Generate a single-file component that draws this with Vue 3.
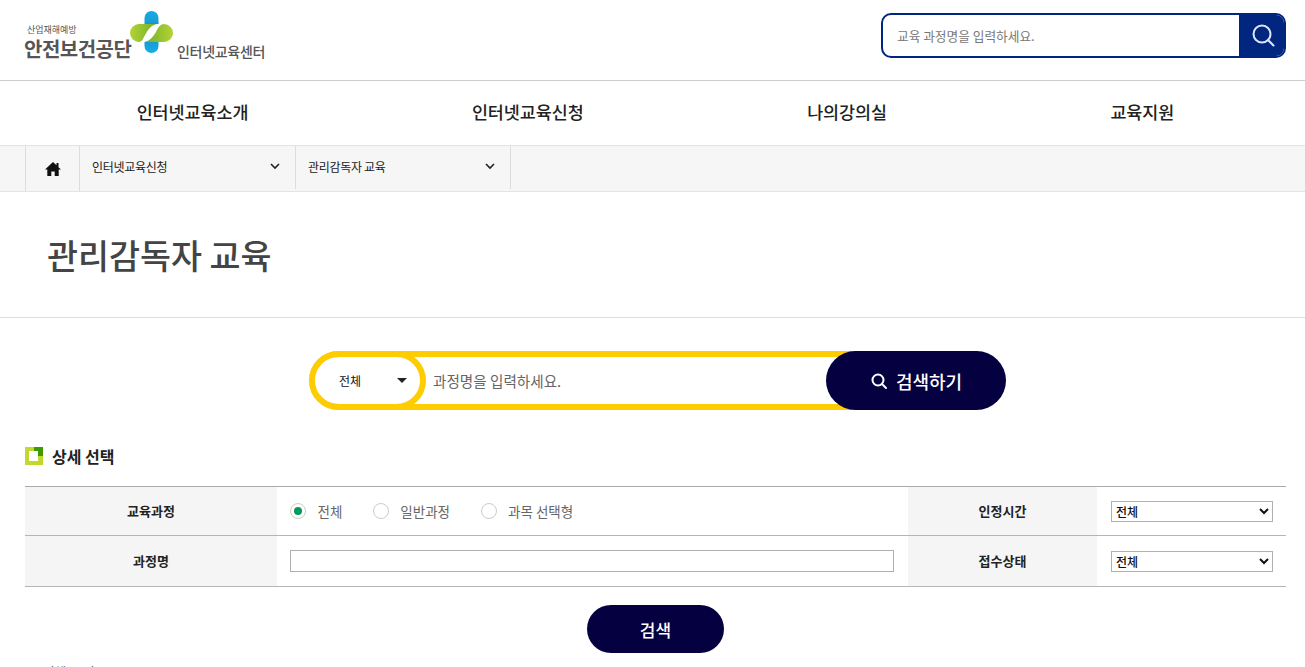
<script setup>
const navItems = ['인터넷교육소개', '인터넷교육신청', '나의강의실', '교육지원']
const crumbs = ['인터넷교육신청', '관리감독자 교육']
const radios = ['전체', '일반과정', '과목 선택형']
</script>

<template>
  <div class="page">
    <header class="top">
      <div class="logo">
        <div class="logo-main">
          <span class="logo-small">산업재해예방</span>
          <span class="logo-big">안전보건공단</span>
        </div>
        <svg class="logo-mark" width="44" height="44" viewBox="0 0 44 44">
          <defs>
            <linearGradient id="bt" x1="0" y1="0" x2="0" y2="1">
              <stop offset="0" stop-color="#16a9e6" />
              <stop offset="0.6" stop-color="#1a9fd8" />
              <stop offset="1" stop-color="#167a8c" />
            </linearGradient>
            <linearGradient id="bb" x1="0" y1="0" x2="0" y2="1">
              <stop offset="0" stop-color="#1b8fc4" />
              <stop offset="1" stop-color="#16aeea" />
            </linearGradient>
            <linearGradient id="gl" x1="0" y1="0" x2="1" y2="0">
              <stop offset="0" stop-color="#b4d335" />
              <stop offset="1" stop-color="#6fae2c" />
            </linearGradient>
            <linearGradient id="gr" x1="0" y1="0" x2="1" y2="0">
              <stop offset="0" stop-color="#6fae2c" />
              <stop offset="1" stop-color="#b4d335" />
            </linearGradient>
          </defs>
          <path d="M14.500 8a7 7 0 0 1 14 0V14C22 14 18 15 14.500 19Z" fill="url(#bt)" />
          <path d="M14.500 36a7 7 0 0 0 14 0V26C27 30 24 32 20 32H14.500Z" fill="url(#bb)" />
          <path d="M9 14H27C21 15 18 20 15 25C13 29 12 32 9 32A9 9 0 0 1 9 14Z" fill="url(#gl)" />
          <path d="M34 14A9 9 0 0 1 34 32H14C20 31 23 27 26 22C28 18 30 14 34 14Z" fill="url(#gr)" />
        </svg>
        <span class="logo-side">인터넷교육센터</span>
      </div>
      <div class="top-search">
        <span class="top-search-text">교육 과정명을 입력하세요.</span>
        <span class="top-search-btn">
          <svg width="26" height="26" viewBox="0 0 26 26" fill="none" stroke="#dfe6f5" stroke-width="2">
            <circle cx="13" cy="11" r="8.500" />
            <path d="M19 17l5.500 5.500" stroke-linecap="round" />
          </svg>
        </span>
      </div>
    </header>

    <nav class="nav">
      <a v-for="item in navItems" :key="item" class="nav-item">{{ item }}</a>
    </nav>

    <div class="crumbs">
      <span class="crumb-home">
        <svg width="16" height="14" viewBox="0 0 16 14" fill="#111">
          <path d="M8 0L0 7.500H2.300V14H6.300V9.500H9.700V14H13.700V7.500H16L13.500 5.200V1H11.500V3.300Z" />
        </svg>
      </span>
      <span v-for="c in crumbs" :key="c" class="crumb">
        <span class="crumb-text">{{ c }}</span>
        <svg width="10" height="7" viewBox="0 0 10 7" fill="none" stroke="#222" stroke-width="1.600">
          <path d="M1 1l4 4 4-4" />
        </svg>
      </span>
    </div>

    <h1 class="title">관리감독자 교육</h1>

    <div class="big-search">
      <div class="big-field">
        <div class="big-select">
          <span class="big-select-text">전체</span>
          <span class="big-caret"></span>
        </div>
        <span class="big-placeholder">과정명을 입력하세요.</span>
      </div>
      <div class="big-btn">
        <svg width="18" height="18" viewBox="0 0 18 18" fill="none" stroke="#fff" stroke-width="2">
          <circle cx="8" cy="8" r="5.500" />
          <path d="M12 12l4 4" stroke-linecap="round" />
        </svg>
        <span>검색하기</span>
      </div>
    </div>

    <div class="section-head">
      <span class="sq"><i></i></span>
      <h2>상세 선택</h2>
    </div>

    <div class="table">
      <div class="th">교육과정</div>
      <div class="td radios">
        <label v-for="(r, i) in radios" :key="r" class="radio">
          <span class="dot" :class="{ on: i === 0 }"></span>{{ r }}
        </label>
      </div>
      <div class="th">인정시간</div>
      <div class="td">
        <select class="sel"><option>전체</option></select>
      </div>
      <div class="th">과정명</div>
      <div class="td">
        <input class="text-input" type="text" />
      </div>
      <div class="th">접수상태</div>
      <div class="td">
        <select class="sel"><option>전체</option></select>
      </div>
    </div>

    <div class="submit-wrap">
      <button class="submit" type="button">검색</button>
    </div>

    <p class="result">전체 <b>16</b>건</p>
  </div>
</template>

<style>
html, body { margin: 0; padding: 0; background: #fff; overflow: hidden; height: 667px; }
</style>

<style scoped>
.page {
  width: 1305px;
  height: 667px;
  overflow: hidden;
  font-family: "Noto Sans CJK KR", "Noto Sans", sans-serif;
  color: #222;
}
.top {
  height: 80px;
  border-bottom: 1px solid #ccc;
  display: flex;
  justify-content: space-between;
  padding: 0 19px 0 24px;
}
.logo { display: flex; align-items: flex-start; }
.logo-main { display: flex; flex-direction: column; padding-top: 24px; width: 106px; }
.logo-small { font-size: 9px; line-height: 12px; color: #555; padding-left: 3px; letter-spacing: -0.05px; white-space: nowrap; }
.logo-big { font-size: 20px; font-weight: 700; line-height: 26px; color: #555; letter-spacing: -0.5px; white-space: nowrap; }
.logo-mark { margin-top: 10px; }
.logo-side { font-size: 14px; font-weight: 500; line-height: 18px; color: #555; margin: 42px 0 0 3px; letter-spacing: -0.3px; white-space: nowrap; }
.top-search {
  margin-top: 13px;
  width: 405px;
  height: 45px;
  box-sizing: border-box;
  border: 2px solid #002680;
  border-radius: 10px;
  display: flex;
  align-items: center;
  justify-content: space-between;
  overflow: hidden;
}
.top-search-text { font-size: 12.700px; line-height: 18px; color: #777; padding-left: 14px; }
.top-search-btn {
  width: 45px;
  height: 45px;
  background: #002680;
  display: flex;
  align-items: center;
  justify-content: center;
}
.nav {
  height: 64px;
  box-sizing: border-box;
  padding: 0 19px 2px 25px;
  display: flex;
  justify-content: space-around;
  align-items: center;
}
.nav-item { font-size: 17.400px; font-weight: 500; line-height: 24px; color: #222; }
.crumbs {
  height: 45px;
  background: #f6f6f6;
  border-top: 1px solid #e3e3e3;
  border-bottom: 1px solid #e3e3e3;
  padding-left: 25px;
  display: flex;
}
.crumb-home {
  width: 53px;
  border-left: 1px solid #ddd;
  border-right: 1px solid #ddd;
  display: flex;
  align-items: center;
  justify-content: center;
  box-sizing: content-box;
}
.crumb {
  width: 216px;
  box-sizing: border-box;
  padding: 0 15px 2px 12px;
  border-right: 1px solid #ddd;
  margin-bottom: 2px;
  display: flex;
  align-items: center;
  justify-content: space-between;
}
.crumb:last-child { width: 215px; }
.crumb-text { font-size: 12px; line-height: 18px; color: #222; letter-spacing: -0.3px; }
.title {
  margin: 0;
  height: 126px;
  box-sizing: border-box;
  border-bottom: 1px solid #ddd;
  padding: 40px 0 0 47px;
  font-size: 33.700px;
  font-weight: 500;
  line-height: 46px;
  color: #444;
}
.big-search {
  margin-top: 33px;
  margin-left: 309px;
  display: flex;
  height: 59px;
}
.big-field {
  width: 551px;
  box-sizing: border-box;
  border: 6px solid #ffcc00;
  border-left: 0;
  border-radius: 30px 0 0 30px;
  display: flex;
  align-items: center;
}
.big-select {
  width: 117px;
  height: 59px;
  margin: -6px 0;
  box-sizing: border-box;
  border: 6px solid #ffcc00;
  border-radius: 30px;
  display: flex;
  align-items: center;
  justify-content: space-between;
  padding: 0 13px 0 24px;
  flex: none;
}
.big-select-text { font-size: 12px; line-height: 18px; color: #111; }
.big-caret {
  border-left: 5px solid transparent;
  border-right: 5px solid transparent;
  border-top: 5px solid #222;
}
.big-placeholder { font-size: 14.600px; line-height: 20px; color: #666; margin-left: 7px; }
.big-btn {
  width: 180px;
  margin-left: -34px;
  height: 59px;
  border-radius: 30px;
  background: #05003f;
  color: #fff;
  display: flex;
  align-items: center;
  justify-content: center;
  gap: 8px;
  font-size: 18px;
  font-weight: 500;
  line-height: 26px;
  position: relative;
}
.section-head {
  display: flex;
  align-items: center;
  margin: 35px 0 0 25px;
  height: 22px;
  gap: 9px;
}
.section-head h2 { margin: 0; font-size: 16px; font-weight: 700; line-height: 22px; color: #222; }
.sq {
  width: 18px;
  height: 18px;
  background: #c3d82e;
  position: relative;
  display: block;
}
.sq::before {
  content: "";
  position: absolute;
  right: 0;
  top: 0;
  width: 9px;
  height: 9px;
  background: #3d9a00;
}
.sq i {
  position: absolute;
  left: 4px;
  top: 4px;
  width: 9px;
  height: 10px;
  background: #fff;
}
.table {
  margin: 19px 19px 0 25px;
  display: grid;
  grid-template-columns: 252px 631px 189px 189px;
  grid-template-rows: 49px 51px;
  border-top: 1px solid #aaa;
}
.th, .td { border-bottom: 1px solid #b5b5b5; display: flex; align-items: center; box-sizing: border-box; }
.th {
  background: #f5f5f5;
  justify-content: center;
  font-size: 13px;
  font-weight: 700;
  line-height: 18px;
  color: #222;
}
.td { padding: 0 13px; }
.radios { gap: 30.500px; }
.radio { display: flex; align-items: center; font-size: 13.500px; line-height: 20px; color: #666; gap: 11.500px; }
.dot {
  width: 16px;
  height: 16px;
  box-sizing: border-box;
  border: 1px solid #ccc;
  border-radius: 50%;
  background: #fff;
  position: relative;
  display: block;
}
.dot.on::after {
  content: "";
  position: absolute;
  left: 3px;
  top: 3px;
  width: 8px;
  height: 8px;
  border-radius: 50%;
  background: #009a5c;
}
.text-input {
  width: 604px;
  height: 22px;
  box-sizing: border-box;
  border: 1px solid #b0b0b0;
  padding: 0;
  margin: 0;
  background: #fff;
  outline: none;
}
.sel {
  width: 162px;
  height: 21px;
  margin-left: 1px;
  box-sizing: border-box;
  border: 1px solid #b0b0b0;
  border-radius: 0;
  background-color: #fff;
  font-family: inherit;
  font-size: 12px;
  font-weight: 500;
  color: #111;
  padding: 0;
  outline: none;
}
.submit-wrap { display: flex; justify-content: center; margin-top: 18px; padding-left: 6px; }
.submit {
  width: 137px;
  height: 48px;
  border: 0;
  border-radius: 24px;
  background: #05003f;
  color: #fff;
  font-family: inherit;
  font-size: 17px;
  font-weight: 500;
  padding: 0;
}
.result { margin: 10px 0 0 43px; font-size: 12.500px; line-height: 18px; color: #222; white-space: nowrap; }
.result b { color: #009a5c; font-weight: 500; }
</style>
